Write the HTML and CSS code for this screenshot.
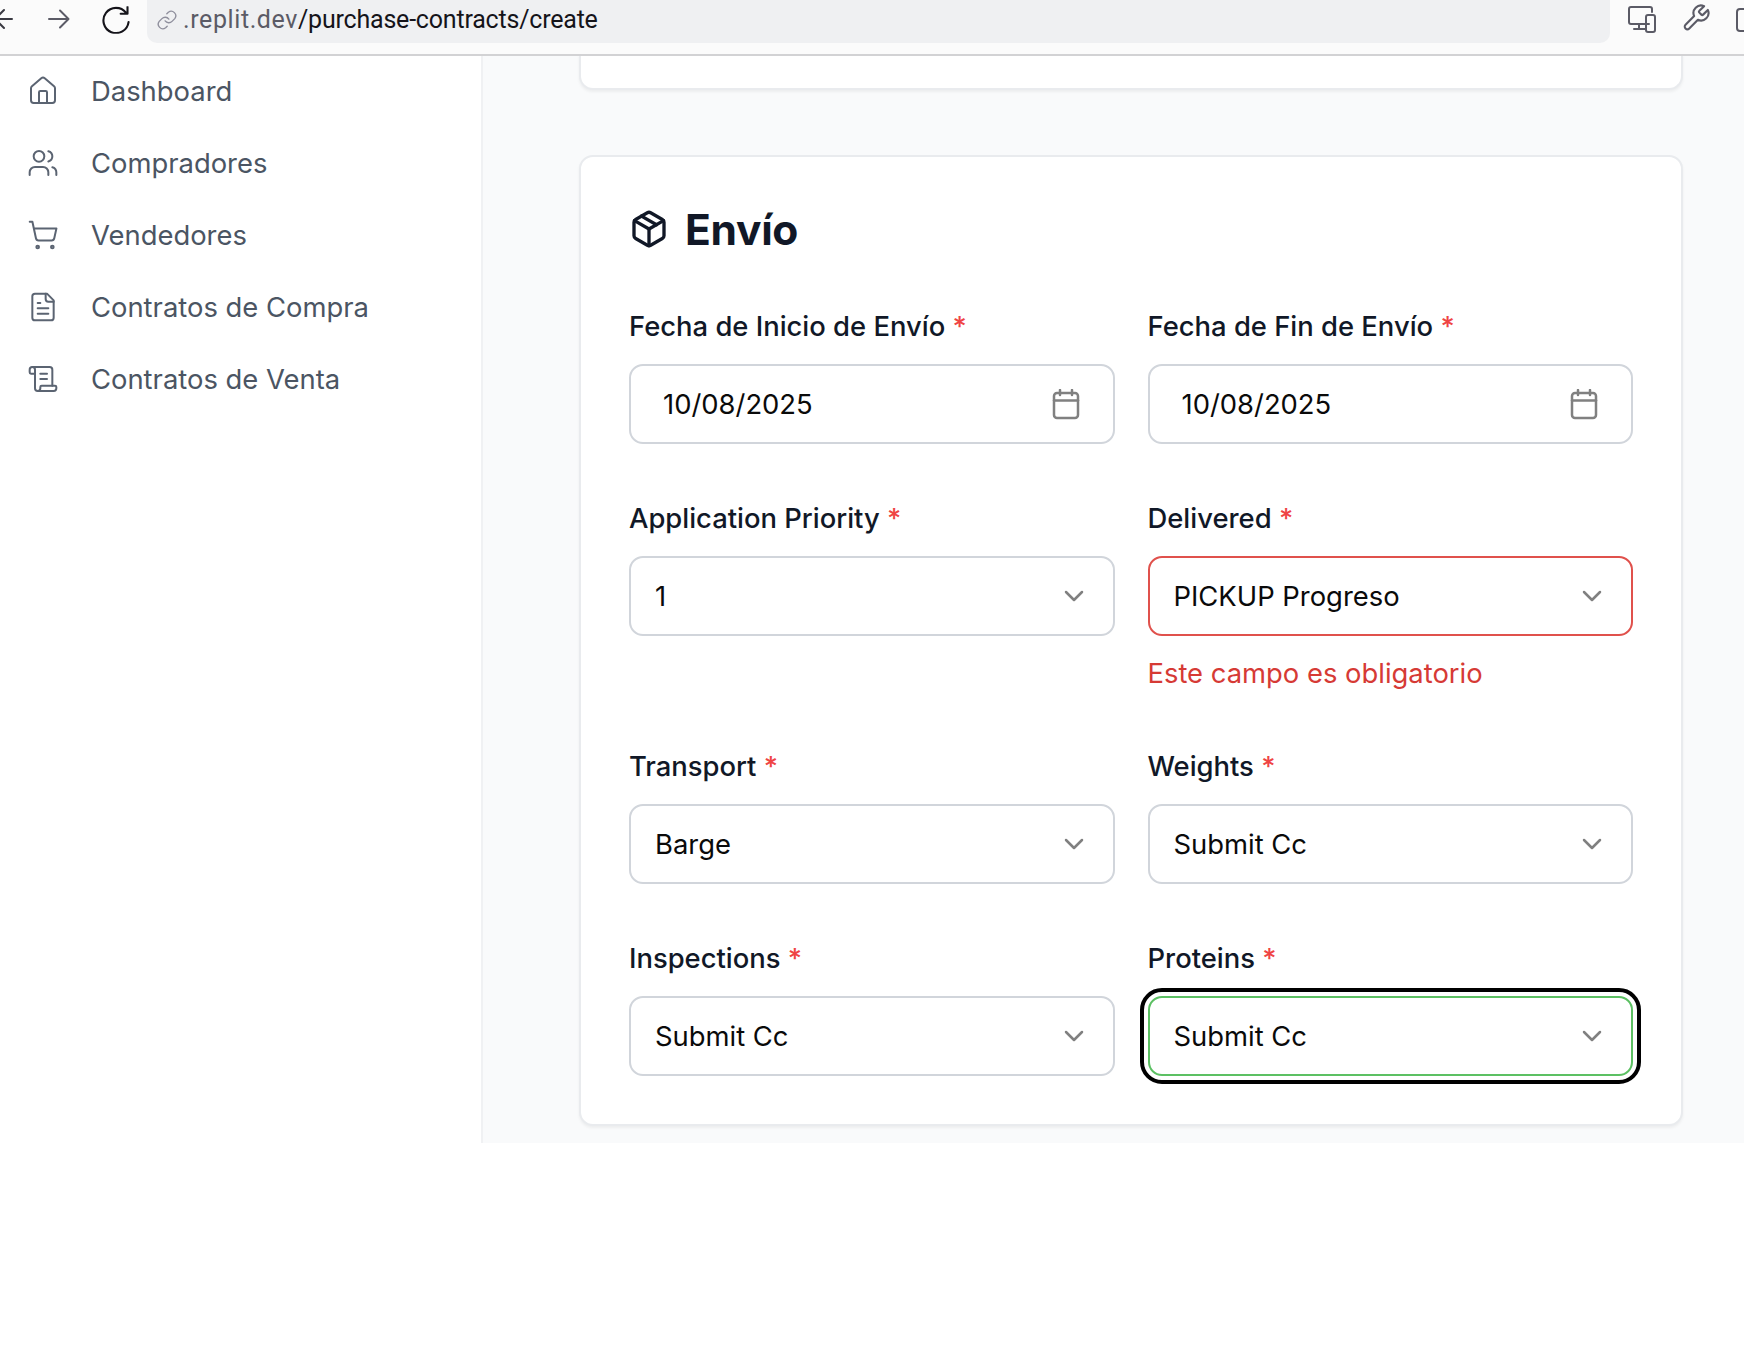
FILE: index.html
```html
<!DOCTYPE html>
<html lang="es">
<head>
  <meta charset="UTF-8">
  <meta name="viewport" content="width=device-width, initial-scale=1.0">
  <title>Contratos de Compra</title>
  <link rel="stylesheet" href="styles.css">
</head>
<body>
  <header class="toolbar">
    <div class="nav-btns">
      <svg class="nav-back" width="28" height="24" viewBox="0 0 28 24"><path d="M21 12H4M13 3l-9 9 9 9"/></svg>
      <svg class="nav-forward" width="24" height="24" viewBox="0 0 24 24"><path d="M2 12h19M13 3.500l8.500 8.500-8.500 8.500"/></svg>
      <svg class="nav-reload" width="30" height="26" viewBox="0 0 30 26"><path d="M23.500 6A12 12 0 1 0 26 15M25 0.500V7h-6.500"/></svg>
    </div>
    <div class="address">
      <svg class="link-icon" width="22" height="22" viewBox="0 0 24 24"><path d="M10 13a5 5 0 0 0 7.500.500l3-3a5 5 0 0 0-7-7l-1.700 1.700"/><path d="M14 11a5 5 0 0 0-7.500-.500l-3 3a5 5 0 0 0 7 7l1.700-1.700"/></svg>
      <span class="host">.replit.dev</span><span class="path">/purchase-contracts/create</span>
    </div>
    <div class="tools">
      <svg width="28" height="28" viewBox="0 0 28 28"><path d="M21 19H3a2 2 0 0 1-2-2V4a2 2 0 0 1 2-2h19a2 2 0 0 1 2 2v3M11 19v5M6 24h11"/><rect x="18" y="10" width="9" height="17" rx="2"/></svg>
      <svg class="wrench" width="30" height="30" viewBox="0 0 24 24"><path d="M14.700 6.300a1 1 0 0 0 0 1.400l1.600 1.600a1 1 0 0 0 1.400 0l3.770-3.770a6 6 0 0 1-7.940 7.940l-6.910 6.910a2.120 2.120 0 0 1-3-3l6.910-6.910a6 6 0 0 1 7.940-7.940l-3.760 3.760z"/></svg>
      <svg width="28" height="28" viewBox="0 0 28 28"><rect x="1" y="4" width="24" height="22" rx="3"/><path d="M9 15h10M14 10v10"/></svg>
    </div>
  </header>

  <div class="app">
    <nav class="sidebar">
      <a class="nav-item">
        <svg class="nav-icon" viewBox="0 0 24 24"><path d="M15 21v-8a1 1 0 0 0-1-1h-4a1 1 0 0 0-1 1v8"/><path d="M3 10a2 2 0 0 1 .709-1.528l7-5.999a2 2 0 0 1 2.582 0l7 5.999A2 2 0 0 1 21 10v9a2 2 0 0 1-2 2H5a2 2 0 0 1-2-2z"/></svg>
        Dashboard
      </a>
      <a class="nav-item">
        <svg class="nav-icon" viewBox="0 0 24 24"><path d="M16 21v-2a4 4 0 0 0-4-4H6a4 4 0 0 0-4 4v2"/><circle cx="9" cy="7" r="4"/><path d="M22 21v-2a4 4 0 0 0-3-3.870"/><path d="M16 3.130a4 4 0 0 1 0 7.750"/></svg>
        Compradores
      </a>
      <a class="nav-item">
        <svg class="nav-icon" viewBox="0 0 24 24"><circle cx="8" cy="21" r="1"/><circle cx="19" cy="21" r="1"/><path d="M2.050 2.050h2l2.660 12.420a2 2 0 0 0 2 1.580h9.780a2 2 0 0 0 1.950-1.570l1.650-7.430H5.120"/></svg>
        Vendedores
      </a>
      <a class="nav-item">
        <svg class="nav-icon" viewBox="0 0 24 24"><path d="M15 2H6a2 2 0 0 0-2 2v16a2 2 0 0 0 2 2h12a2 2 0 0 0 2-2V7Z"/><path d="M14 2v4a2 2 0 0 0 2 2h4"/><path d="M10 9H8"/><path d="M16 13H8"/><path d="M16 17H8"/></svg>
        Contratos de Compra
      </a>
      <a class="nav-item">
        <svg class="nav-icon" viewBox="0 0 24 24"><path d="M15 12h-5"/><path d="M15 8h-5"/><path d="M19 17V5a2 2 0 0 0-2-2H4"/><path d="M8 21h12a2 2 0 0 0 2-2v-1a1 1 0 0 0-1-1H11a1 1 0 0 0-1 1v1a2 2 0 1 1-4 0V5a2 2 0 1 0-4 0v2a1 1 0 0 0 1 1h3"/></svg>
        Contratos de Venta
      </a>
    </nav>

    <main class="content">
      <div class="card card-prev"></div>

      <section class="card card-shipping">
        <h2 class="card-title">
          <svg class="title-icon" viewBox="0 0 24 24"><path d="m7.500 4.270 9 5.150"/><path d="M21 8a2 2 0 0 0-1-1.730l-7-4a2 2 0 0 0-2 0l-7 4A2 2 0 0 0 3 8v8a2 2 0 0 0 1 1.730l7 4a2 2 0 0 0 2 0l7-4A2 2 0 0 0 21 16Z"/><path d="m3.300 7 8.700 5 8.700-5"/><path d="M12 22V12"/></svg>
          Envío
        </h2>

        <div class="form-grid">
          <div class="field">
            <div class="label">Fecha de Inicio de Envío <span class="req">*</span></div>
            <div class="control control-date">10/08/2025
              <svg class="cal" width="28" height="31" viewBox="0 0 28 31"><path d="M8 1v5M20 1v5"/><rect x="2" y="4" width="24" height="25" rx="3"/><path d="M2 11.500h24"/></svg>
            </div>
          </div>
          <div class="field">
            <div class="label">Fecha de Fin de Envío <span class="req">*</span></div>
            <div class="control control-date">10/08/2025
              <svg class="cal" width="28" height="31" viewBox="0 0 28 31"><path d="M8 1v5M20 1v5"/><rect x="2" y="4" width="24" height="25" rx="3"/><path d="M2 11.500h24"/></svg>
            </div>
          </div>

          <div class="field">
            <div class="label">Application Priority <span class="req">*</span></div>
            <div class="control">1
              <svg class="chev" width="20" height="12" viewBox="0 0 20 12"><path d="M2 2l8 8 8-8"/></svg>
            </div>
          </div>
          <div class="field">
            <div class="label">Delivered <span class="req">*</span></div>
            <div class="control is-error">PICKUP Progreso
              <svg class="chev" width="20" height="12" viewBox="0 0 20 12"><path d="M2 2l8 8 8-8"/></svg>
            </div>
            <div class="error-msg">Este campo es obligatorio</div>
          </div>

          <div class="field">
            <div class="label">Transport <span class="req">*</span></div>
            <div class="control">Barge
              <svg class="chev" width="20" height="12" viewBox="0 0 20 12"><path d="M2 2l8 8 8-8"/></svg>
            </div>
          </div>
          <div class="field">
            <div class="label">Weights <span class="req">*</span></div>
            <div class="control">Submit Cc
              <svg class="chev" width="20" height="12" viewBox="0 0 20 12"><path d="M2 2l8 8 8-8"/></svg>
            </div>
          </div>

          <div class="field">
            <div class="label">Inspections <span class="req">*</span></div>
            <div class="control">Submit Cc
              <svg class="chev" width="20" height="12" viewBox="0 0 20 12"><path d="M2 2l8 8 8-8"/></svg>
            </div>
          </div>
          <div class="field">
            <div class="label">Proteins <span class="req">*</span></div>
            <div class="control is-focus">Submit Cc
              <svg class="chev" width="20" height="12" viewBox="0 0 20 12"><path d="M2 2l8 8 8-8"/></svg>
            </div>
          </div>
        </div>
      </section>
    </main>
  </div>
</body>
</html>
```

FILE: styles.css
```css
* {
  box-sizing: border-box;
}
body {
  margin: 0;
  height: 1354px;
  overflow: hidden;
  background: #fff;
  font-family: Inter, "Liberation Sans", sans-serif;
  font-size: 27.400px;
  line-height: 42px;
  color: #111827;
}
svg {
  fill: none;
  stroke-linecap: round;
  stroke-linejoin: round;
  flex: none;
}

/* browser bar */
.toolbar {
  display: flex;
  height: 56px;
  background: #fbfbfb;
  border-bottom: 2px solid #d2d2d4;
  overflow: hidden;
}
.nav-btns {
  display: flex;
  width: 147px;
  flex: none;
  padding-top: 7px;
}
.nav-btns svg {
  stroke: #3a3a42;
  stroke-width: 2;
}
.nav-back {
  margin-left: -9px;
}
.nav-forward {
  margin-left: 28px;
}
.nav-forward path {
  stroke: #5b5b66;
}
.nav-reload {
  margin-left: 31px;
  transform: scale(1.050);
}
.nav-reload path {
  stroke: #15141a;
}
.address {
  display: flex;
  align-items: center;
  width: 1463px;
  height: 43px;
  flex: none;
  padding: 0 0 4px 9px;
  background: #eff0f2;
  border-radius: 0 0 10px 10px;
  font-family: Roboto, sans-serif;
  font-size: 25px;
  color: #15141a;
}
.link-icon {
  stroke: #8f8f9d;
  stroke-width: 1.5;
  margin-right: 5px;
}
.host {
  color: #5b5b66;
  letter-spacing: .6px;
}
.path {
  letter-spacing: -.2px;
}
.tools {
  display: flex;
  gap: 25px;
  padding: 5px 0 0 18px;
}
.tools svg {
  stroke: #5b5b66;
  stroke-width: 2;
}
.tools .wrench {
  stroke-width: 1.700;
  margin-top: -2px;
}

/* layout */
.app {
  display: flex;
  height: 1087px;
  overflow: hidden;
}
.sidebar {
  width: 483px;
  flex: none;
  background: #fff;
  border-right: 2px solid #f0f1f3;
}
.nav-item {
  display: flex;
  align-items: center;
  height: 72px;
  padding: 0 0 2px 27px;
  color: #4b5563;
}
.nav-icon {
  width: 32px;
  height: 32px;
  margin-right: 32px;
  margin-top: -1px;
  stroke: #5b6472;
  stroke-width: 1.500;
}
.content {
  flex: 1;
  padding: 0 61px 0 96px;
  background: #f9fafb;
}
.card {
  background: #fff;
  border: 2px solid #e9ebee;
  border-radius: 14px;
  box-shadow: 0 2px 3px rgba(0, 0, 0, .05);
}
.card-prev {
  height: 36px;
  margin-top: -2px;
  border-top: 0;
  border-radius: 0 0 14px 14px;
}
.card-shipping {
  height: 971px;
  margin-top: 65px;
  padding: 42px 48px 0 48px;
}
.card-title {
  display: flex;
  align-items: center;
  gap: 16px;
  height: 61px;
  margin: 0 0 45px;
  font-size: 42.500px;
  font-weight: 700;
  letter-spacing: -.3px;
}
.title-icon {
  width: 40px;
  height: 40px;
  margin-top: -2px;
  stroke: #111827;
  stroke-width: 2;
}

/* form */
.form-grid {
  display: grid;
  grid-template-columns: 1fr 1fr;
  column-gap: 33px;
  row-gap: 53px;
}
.label {
  height: 42px;
  margin-bottom: 17px;
  font-weight: 500;
}
.req {
  color: #ef4444;
}
.control {
  display: flex;
  align-items: center;
  justify-content: space-between;
  height: 80px;
  padding: 0 29px 0 24px;
  background: #fff;
  border: 2px solid #d1d5db;
  border-radius: 14px;
  color: #0a0a0a;
}
.control-date {
  padding: 0 33px 0 32px;
}
.chev {
  stroke: #808080;
  stroke-width: 2.500;
}
.cal {
  stroke: #808080;
  stroke-width: 2.500;
}
.is-error {
  border-color: #e0514c;
}
.is-focus {
  border-color: #5cc063;
  outline: 4px solid #000;
  outline-offset: 4px;
}
.error-msg {
  height: 40px;
  margin-top: 16px;
  color: #d63a35;
}
```
